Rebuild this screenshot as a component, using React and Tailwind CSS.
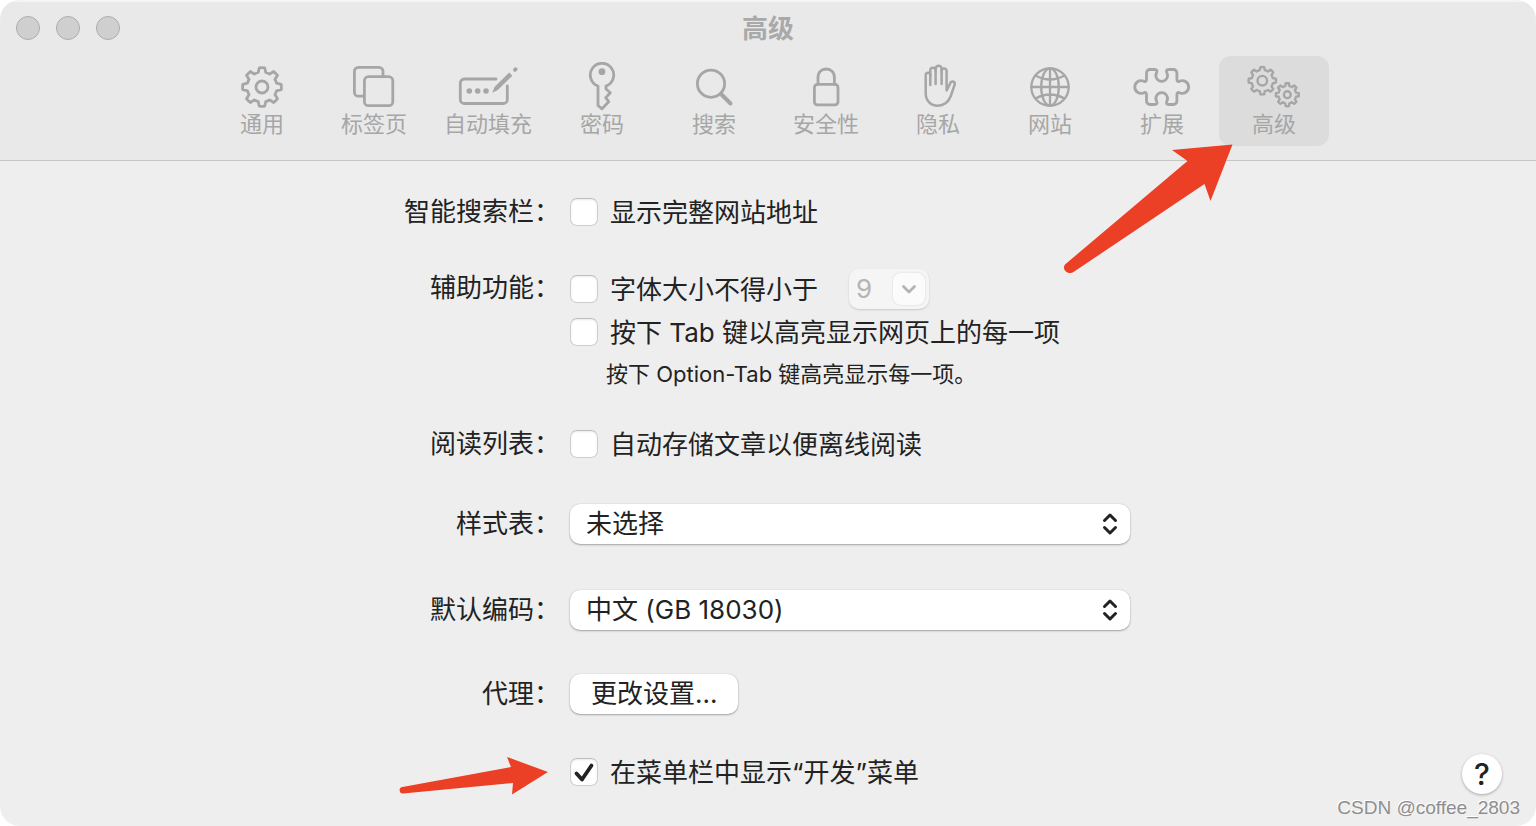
import React, { useState } from "react";

// Outline of a cog wheel as an SVG path
function gearPath(cx, cy, teeth, outer, inner, tip, base) {
  const point = (radius, deg) => {
    const a = (deg * Math.PI) / 180;
    return `${(cx + radius * Math.sin(a)).toFixed(2)} ${(cy - radius * Math.cos(a)).toFixed(2)}`;
  };
  const step = 360 / teeth;
  let d = "";
  for (let i = 0; i < teeth; i++) {
    const mid = i * step;
    d += i === 0 ? `M${point(inner, mid - base)}` : `A${inner} ${inner} 0 0 1 ${point(inner, mid - base)}`;
    d += `L${point(outer, mid - tip)}A${outer} ${outer} 0 0 1 ${point(outer, mid + tip)}L${point(inner, mid + base)}`;
  }
  return `${d}A${inner} ${inner} 0 0 1 ${point(inner, -base)}Z`;
}

const icons = {
  general: (
    <>
      <path d={gearPath(30, 25, 8, 19.4, 15, 8, 14.5)} />
      <circle cx="30" cy="25" r="6" />
    </>
  ),
  tabs: (
    <>
      <rect x="20.4" y="14.7" width="28.4" height="29" rx="4" />
      <path d="M19 34.2h-4.600a4 4 0 0 1-4-4V9.400a4 4 0 0 1 4-4h20.600a4 4 0 0 1 4 4V14" />
    </>
  ),
  autofill: (
    <>
      <path d="M38 17H6.300a4 4 0 0 0-4 4v16.500a4 4 0 0 0 4 4h39a4 4 0 0 0 4-4V24" />
      <g fill="currentColor" stroke="none">
        <circle cx="11.3" cy="29" r="2.8" />
        <circle cx="19.7" cy="29" r="2.8" />
        <circle cx="28" cy="29" r="2.8" />
        <path d="M34.300 30.700 36.500 25 51.200 10.500 54.400 13.700 39.800 28z" />
      </g>
      <path d="M57 7.800l.6-.6" strokeWidth="3.8" />
    </>
  ),
  passwords: (
    <>
      <path d="M26 24a11.700 11.700 0 1 1 8 0v3l4.300 3.700-4.600 5 3 4L30 46.800 26 43.500z" />
      <circle cx="30" cy="9.7" r="3.4" fill="currentColor" stroke="none" />
    </>
  ),
  search: (
    <>
      <circle cx="27" cy="21.7" r="13.6" />
      <path d="M37 32l9.500 9.500" strokeWidth="4" />
    </>
  ),
  security: (
    <>
      <rect x="18.400" y="22.4" width="23.6" height="20.4" rx="3" />
      <path d="M22 22.400V16c0-6 3.500-9 8.200-9s8.200 3 8.200 9v6.400" />
    </>
  ),
  privacy: (
    <g strokeWidth="2.5">
      <path d="M22.300 23V13a2.300 2.300 0 0 0-4.600 0v18c0 8 5.300 12.700 12 12.700 6.300 0 10.800-3.700 13.100-9.700l3.900-11.500a2.300 2.300 0 0 0-4.200-1.800L38.600 28.500V9a2.500 2.500 0 0 0-5 0v13" />
      <path d="M22.300 14V8.300a2.650 2.650 0 0 1 5.300 0V22" />
      <path d="M27.600 9V6.800a3 3 0 0 1 6 0V10" />
    </g>
  ),
  websites: (
    <g strokeWidth="2.3">
      <circle cx="30" cy="25" r="18.7" />
      <ellipse cx="30" cy="25" rx="8.8" ry="18.7" />
      <path d="M30 6.300v37.400M11.300 25h37.400M15.500 13.500q14.500 8 29 0M15.500 36.500q14.500-8 29 0" />
    </g>
  ),
  extensions: (
    <path d="M18 7.500h4.500c2.500 0 3 1.500 2 3.500a5.800 5.800 0 1 0 10.400 0c-1-2-.5-3.500 2-3.500h4.500a3.500 3.500 0 0 1 3.500 3.500v6.500c0 2 1.500 2.500 3.100 1.500a6.400 6.400 0 1 1 0 12c-1.600-1-3.100-.5-3.100 1.500v6.500a3.500 3.500 0 0 1-3.500 3.500h-4.500c-2.500 0-3-1.500-2-3.500a5.800 5.800 0 1 0-10.400 0c1 2 .5 3.500-2 3.500h-4.500a3.500 3.500 0 0 1-3.500-3.500v-6.500c0-2-1.500-2.500-3.100-1.500a6.400 6.400 0 1 1 0-12c1.600 1 3.100.5 3.100-1.500v-6.500a3.500 3.500 0 0 1 3.500-3.500z" />
  ),
  advanced: (
    <g strokeWidth="2.4">
      <path d={gearPath(18.3, 18.7, 8, 13.7, 10.8, 8, 13.5)} />
      <circle cx="18.3" cy="18.7" r="4.8" />
      <path d={gearPath(43.3, 32.7, 8, 11.5, 8.9, 8, 13.5)} />
      <circle cx="43.3" cy="32.7" r="3.4" />
    </g>
  ),
};

const tabs = [
  { id: "general", label: "通用" },
  { id: "tabs", label: "标签页" },
  { id: "autofill", label: "自动填充" },
  { id: "passwords", label: "密码" },
  { id: "search", label: "搜索" },
  { id: "security", label: "安全性" },
  { id: "privacy", label: "隐私" },
  { id: "websites", label: "网站" },
  { id: "extensions", label: "扩展" },
  { id: "advanced", label: "高级" },
];

function ToolbarTab({ id, label, active, onClick }) {
  return (
    <button
      type="button"
      onClick={onClick}
      className={`flex min-w-[110px] flex-col items-center rounded-xl px-[13px] pt-[6px] pb-[10px] ${active ? "bg-[#dcdcdc]" : ""}`}
    >
      <svg
        viewBox="0 0 60 50"
        className="h-[50px] w-[60px]"
        fill="none"
        stroke="currentColor"
        strokeWidth="2.8"
        strokeLinecap="round"
        strokeLinejoin="round"
        aria-hidden="true"
      >
        {icons[id]}
      </svg>
      <span className="text-[22px] leading-6">{label}</span>
    </button>
  );
}

function Row({ label, htmlFor, className = "", children }) {
  return (
    <div className={`relative grid grid-cols-[160px_1fr] gap-x-[10px] ${className}`}>
      {label ? (
        <label htmlFor={htmlFor} className="text-right leading-10 whitespace-nowrap">
          {label}
        </label>
      ) : null}
      <div className="col-start-2">{children}</div>
    </div>
  );
}

function Checkbox({ id, label, defaultChecked }) {
  return (
    <div className="flex h-10 items-center gap-3">
      <span className="relative size-7">
        <input
          id={id}
          type="checkbox"
          defaultChecked={defaultChecked}
          className="peer block size-7 appearance-none rounded-[7px] border border-[#cdcdcd] border-t-[#bdbdbd] bg-white shadow-[inset_0_1px_2px_rgba(0,0,0,0.08)]"
        />
        <svg viewBox="0 0 28 28" className="pointer-events-none absolute inset-0 hidden size-7 peer-checked:block" aria-hidden="true">
          <path d="M6.500 15.500 12 21.500 21.500 7.500" fill="none" stroke="#222" strokeWidth="3.8" strokeLinecap="round" strokeLinejoin="round" />
        </svg>
      </span>
      <label htmlFor={id} className="whitespace-nowrap">
        {label}
      </label>
    </div>
  );
}

function PopupSelect({ id, options }) {
  return (
    <div className="relative h-10 max-w-[560px]">
      <select
        id={id}
        className="h-10 w-full appearance-none rounded-[10px] bg-white pr-12 pb-[2px] pl-4 shadow-[0_1px_2px_rgba(0,0,0,0.3),0_0_1px_rgba(0,0,0,0.25)]"
      >
        {options.map((option) => (
          <option key={option}>{option}</option>
        ))}
      </select>
      <svg viewBox="0 0 16 24" className="pointer-events-none absolute top-2 right-3 h-6 w-4" aria-hidden="true">
        <path d="M2.500 8.500 8 3l5.500 5.500M2.500 15.500 8 21l5.500-5.500" fill="none" stroke="#222" strokeWidth="3" strokeLinecap="round" strokeLinejoin="round" />
      </svg>
    </div>
  );
}

function App() {
  const [current, setCurrent] = useState("advanced");

  return (
    <div className="relative min-h-screen overflow-hidden rounded-[20px] bg-[#eeeeee] font-['Inter','Noto_Sans_CJK_SC',sans-serif] text-[26px] text-[#222]">
      <header className="h-[161px] border-b border-[#c6c6c6] bg-[#e9e9e9] shadow-[inset_0_2px_1px_#f6f6f6]">
        <div className="grid h-14 grid-cols-[1fr_auto_1fr] items-center px-4">
          <div className="flex gap-4">
            <span className="size-6 rounded-full border border-[#adadad] bg-[#cfcfcf]" />
            <span className="size-6 rounded-full border border-[#adadad] bg-[#cfcfcf]" />
            <span className="size-6 rounded-full border border-[#adadad] bg-[#cfcfcf]" />
          </div>
          <h1 className="font-bold text-[#a9a9a9]">高级</h1>
        </div>
        <nav className="flex justify-center gap-[2px] text-[#a6a6a6]">
          {tabs.map((tab) => (
            <ToolbarTab key={tab.id} {...tab} active={tab.id === current} onClick={() => setCurrent(tab.id)} />
          ))}
        </nav>
      </header>

      <main className="grid grid-cols-[1fr_minmax(0,736px)_1fr] pt-[31px]">
        <form className="col-start-2">
          <Row label="智能搜索栏：" htmlFor="full-address">
            <Checkbox id="full-address" label="显示完整网站地址" />
          </Row>

          <Row label="辅助功能：" htmlFor="min-font" className="mt-9">
            <div className="flex h-[42px] items-center gap-[31px]">
              <Checkbox id="min-font" label="字体大小不得小于" />
              <div className="relative h-10 w-20">
                <select
                  disabled
                  aria-label="字体大小"
                  className="h-10 w-20 appearance-none rounded-[10px] bg-[#f5f5f5] pb-[2px] pl-[7px] text-[#b4b4b4] opacity-100 shadow-[0_1px_2px_rgba(0,0,0,0.16)]"
                >
                  <option>9</option>
                </select>
                <span className="pointer-events-none absolute top-1 right-1 flex size-8 items-center justify-center rounded-lg bg-[#fbfbfb] shadow-[0_0_2px_rgba(0,0,0,0.16)]">
                  <svg viewBox="0 0 16 16" className="size-4" aria-hidden="true">
                    <path d="M2.500 5.500 8 11l5.500-5.500" fill="none" stroke="#b4b4b4" strokeWidth="2.8" strokeLinecap="round" strokeLinejoin="round" />
                  </svg>
                </span>
              </div>
            </div>
            <div className="mt-[2px]">
              <Checkbox id="tab-key" label="按下 Tab 键以高亮显示网页上的每一项" />
            </div>
            <p className="mt-[10px] ml-9 text-[22px] leading-6 whitespace-nowrap">按下 Option-Tab 键高亮显示每一项。</p>
          </Row>

          <Row label="阅读列表：" htmlFor="reading-list" className="mt-[38px]">
            <Checkbox id="reading-list" label="自动存储文章以便离线阅读" />
          </Row>

          <Row label="样式表：" htmlFor="stylesheet" className="mt-10">
            <PopupSelect id="stylesheet" options={["未选择", "其他..."]} />
          </Row>

          <Row label="默认编码：" htmlFor="encoding" className="mt-[46px]">
            <PopupSelect id="encoding" options={["中文 (GB 18030)", "Unicode (UTF-8)"]} />
          </Row>

          <Row label="代理：" htmlFor="proxy" className="mt-11">
            <button
              id="proxy"
              type="button"
              className="block h-10 rounded-[10px] bg-white px-[21px] leading-10 shadow-[0_1px_2px_rgba(0,0,0,0.3),0_0_1px_rgba(0,0,0,0.25)]"
            >
              更改设置...
            </button>
          </Row>
        </form>

        <div className="col-start-2 mt-[38px]">
          <Row>
            <Checkbox id="develop-menu" label="在菜单栏中显示“开发”菜单" defaultChecked />
            {/* arrow towards the develop menu option */}
            <svg viewBox="0 0 156 44" className="pointer-events-none absolute top-[2px] -left-1 h-11 w-[156px]" aria-hidden="true">
              <path d="M152 18 111 3l4 10L6.500 33a3.200 3.200 0 0 0 .7 6.400L117 29l-1 11.500z" fill="#eb4026" />
            </svg>
          </Row>
        </div>
        <div className="mt-[38px] flex h-11 items-center justify-end pr-[34px]">
          <button
            type="button"
            aria-label="帮助"
            className="size-10 rounded-full bg-white text-[30px] leading-10 font-medium shadow-[0_1px_3px_rgba(0,0,0,0.3)]"
          >
            ?
          </button>
        </div>
      </main>

      {/* arrow towards the advanced tab */}
      <svg viewBox="0 0 176 136" className="pointer-events-none absolute top-[140px] left-1/2 ml-[292px] h-[136px] w-[176px]" aria-hidden="true">
        <path d="M172.500 4.500 112 10l15.500 11L5 124.500c-3 4 1 9 5.500 8.500 1.500 0 3-1 4.500-2L144.500 44l6 17z" fill="#eb4026" />
      </svg>

      <span className="absolute right-4 bottom-[6px] font-['Liberation_Sans',sans-serif] text-[19px] leading-6 text-[#8e8e8e] [text-shadow:-1px_-1px_0_#fff]">
        CSDN @coffee_2803
      </span>
    </div>
  );
}

export default App;
